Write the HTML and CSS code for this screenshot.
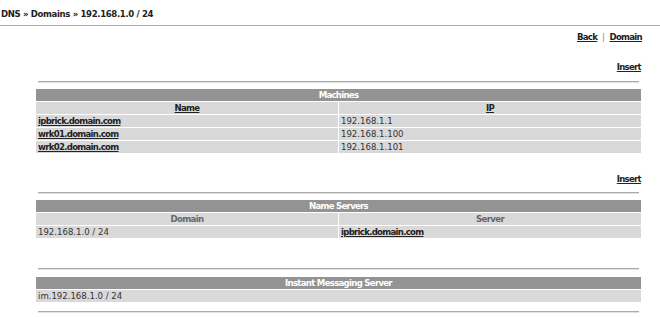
FILE: index.html
```html
<!DOCTYPE html>
<html lang="en">
<head>
  <meta charset="UTF-8" />
  <title>DNS Domain</title>
  <link rel="stylesheet" href="styles.css">
</head>
<body>

  <div class="crumb">DNS &raquo; Domains &raquo; 192.168.1.0 / 24</div>

  <div class="content">
    <div class="actions">
      <a href="#">Back</a> <span class="sep">|</span> <a href="#">Domain</a>
    </div>

    <div class="insert first"><a href="#">Insert</a></div>
    <hr class="rule first-rule">

    <table class="grid">
      <tr><th class="title" colspan="2">Machines</th></tr>
      <tr class="sub"><td><a href="#">Name</a></td><td><a href="#">IP</a></td></tr>
      <tr><td><a href="#" class="host">ipbrick.domain.com</a></td><td>192.168.1.1</td></tr>
      <tr><td><a href="#" class="host">wrk01.domain.com</a></td><td>192.168.1.100</td></tr>
      <tr><td><a href="#" class="host">wrk02.domain.com</a></td><td>192.168.1.101</td></tr>
    </table>

    <div class="insert second"><a href="#">Insert</a></div>
    <hr class="rule second-rule">

    <table class="grid">
      <tr><th class="title" colspan="2">Name Servers</th></tr>
      <tr class="sub plain"><td>Domain</td><td>Server</td></tr>
      <tr><td>192.168.1.0 / 24</td><td><a href="#" class="host">ipbrick.domain.com</a></td></tr>
    </table>

    <hr class="rule third-rule">

    <table class="grid">
      <tr><th class="title">Instant Messaging Server</th></tr>
      <tr><td>im.192.168.1.0 / 24</td></tr>
    </table>

    <hr class="rule last-rule">
  </div>

</body>
</html>
```

FILE: styles.css
```css
* {
  box-sizing: border-box;
}

body {
  margin: 0;
  font-family: "DejaVu Sans Condensed", "DejaVu Sans", sans-serif;
  font-size: 9.5px;
  line-height: 12px;
  color: #333;
  background: #fff;
}

a {
  color: #222;
  font-weight: bold;
  letter-spacing: -0.7px;
}

.crumb {
  padding: 8px 1px 5px;
  border-bottom: 1px solid #aaa;
  font-weight: bold;
  color: #222;
  letter-spacing: -0.35px;
}

.content {
  padding: 0 18px 0 35px;
}

.actions {
  margin-top: 5px;
  text-align: right;
}

.sep {
  color: #888;
  margin: 0 2px;
}

.insert {
  text-align: right;
  padding-right: 1px;
}

.insert.first {
  margin-top: 18px;
}

.insert.second {
  margin-top: 19px;
}

.rule {
  height: 2px;
  margin: 0 3px;
  border: 0;
  border-top: 1px solid #aaa;
  border-bottom: 1px solid #e2e2e2;
}

.first-rule {
  margin-top: 8px;
  margin-bottom: 5px;
}

.second-rule {
  margin-top: 7px;
  margin-bottom: 5px;
}

.third-rule {
  margin-top: 29px;
  margin-bottom: 6px;
}

.last-rule {
  margin-top: 8px;
}

.grid {
  width: 100%;
  table-layout: fixed;
  border-spacing: 1px;
}

.grid td,
.grid th {
  height: 12px;
  padding: 0 2px;
  background: #d9d9d9;
  text-align: left;
  white-space: nowrap;
  overflow: hidden;
}

.grid th.title {
  background: #939393;
  color: #fff;
  font-weight: bold;
  text-align: center;
  letter-spacing: -0.7px;
}

.grid .sub td {
  text-align: center;
}

.grid .sub.plain td {
  color: #666;
  font-weight: bold;
  letter-spacing: -0.6px;
}
```
